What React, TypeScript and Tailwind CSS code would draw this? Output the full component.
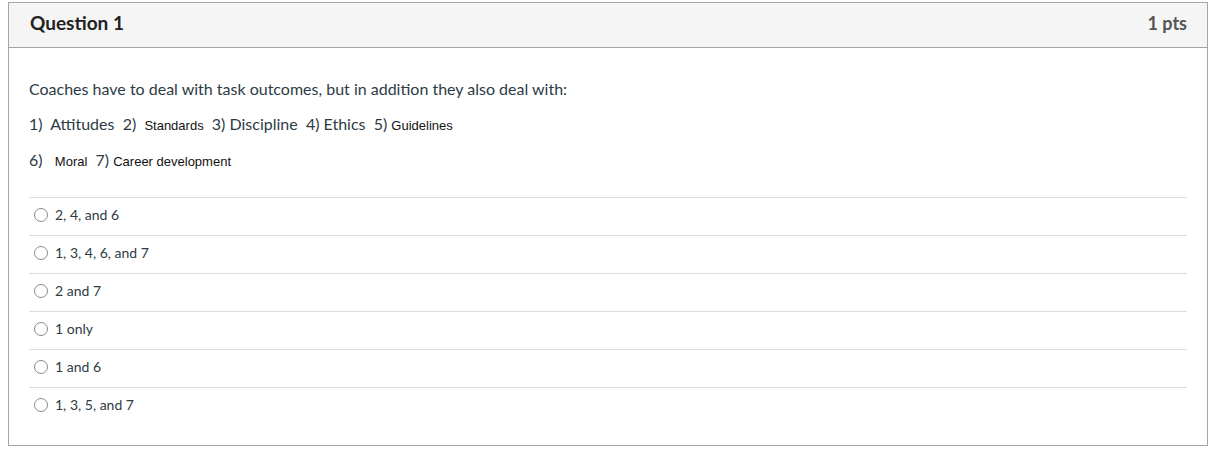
import React from 'react'

const answers = ['2, 4, and 6', '1, 3, 4, 6, and 7', '2 and 7', '1 only', '1 and 6', '1, 3, 5, and 7']

function Radio() {
  return <span className="w-[14px] h-[14px] rounded-full border border-[#8a8a8a] bg-white shrink-0" />
}

export default function App() {
  return (
    <div className="w-[1210px] h-[454px] bg-white pt-[2px] pl-[8px] font-['Lato',sans-serif] text-[#2d3b45]">
      <div className="w-[1200px] h-[444px] border border-[#a6a6a6]">
        {/* Header */}
        <div className="h-[45px] bg-[#f5f5f5] border-b border-[#a6a6a6] flex items-center justify-between pl-[21px] pr-[20px] pb-[3px]">
          <span className="text-[19px] font-bold text-[#222]">Question 1</span>
          <span className="text-[18px] font-bold text-[#555]">1 pts</span>
        </div>

        {/* Content */}
        <div className="px-[20px] pt-[31px]">
          <p className="text-[16px] leading-[20px]">Coaches have to deal with task outcomes, but in addition they also deal with:</p>
          <p className="mt-[14px] text-[16px] leading-[22px] whitespace-pre">
            {'1)  Attitudes  2)  '}
            <span className="font-['Liberation_Sans',Arial,sans-serif] text-[13px] text-[#111]">Standards</span>
            {'  3) Discipline  4) Ethics  5) '}
            <span className="font-['Liberation_Sans',Arial,sans-serif] text-[13px] text-[#111]">Guidelines</span>
          </p>
          <p className="mt-[12px] text-[16px] leading-[22px] whitespace-pre">
            {'6)   '}
            <span className="font-['Liberation_Sans',Arial,sans-serif] text-[13px] text-[#111]">Moral</span>
            {'  7) '}
            <span className="font-['Liberation_Sans',Arial,sans-serif] text-[13px] text-[#111]">Career development</span>
          </p>

          <div className="mt-[24px]">
            {answers.map((a) => (
              <div key={a} className="h-[38px] border-t border-[#dddddd] flex items-center gap-[7px] pl-[5px] pb-[4px]">
                <Radio />
                <span className="text-[14px]">{a}</span>
              </div>
            ))}
          </div>
        </div>
      </div>
    </div>
  )
}
